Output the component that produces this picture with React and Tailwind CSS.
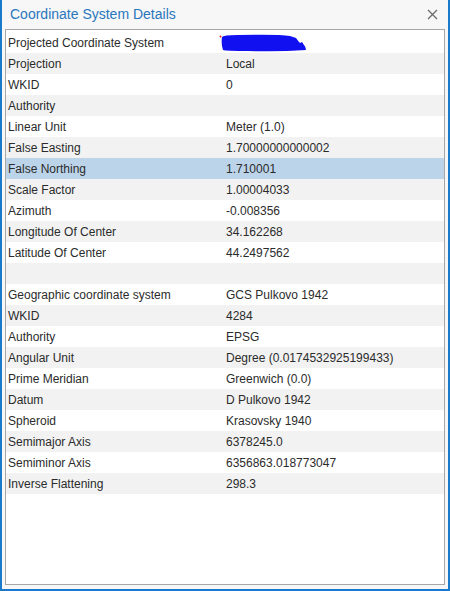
import React from 'react';

const projected = [
  ['Projected Coordinate System', null],
  ['Projection', 'Local'],
  ['WKID', '0'],
  ['Authority', ''],
  ['Linear Unit', 'Meter (1.0)'],
  ['False Easting', '1.70000000000002'],
  ['False Northing', '1.710001'],
  ['Scale Factor', '1.00004033'],
  ['Azimuth', '-0.008356'],
  ['Longitude Of Center', '34.162268'],
  ['Latitude Of Center', '44.2497562'],
  ['', ''],
  ['Geographic coordinate system', 'GCS Pulkovo 1942'],
  ['WKID', '4284'],
  ['Authority', 'EPSG'],
  ['Angular Unit', 'Degree (0.0174532925199433)'],
  ['Prime Meridian', 'Greenwich (0.0)'],
  ['Datum', 'D Pulkovo 1942'],
  ['Spheroid', 'Krasovsky 1940'],
  ['Semimajor Axis', '6378245.0'],
  ['Semiminor Axis', '6356863.018773047'],
  ['Inverse Flattening', '298.3'],
];

// scribble that hides the coordinate system name
const Redacted = () => (
  <svg width="92" height="20" viewBox="0 0 92 20" className="-ml-[8px]">
    <path d="M2 4 L3 3" stroke="#e02020" strokeWidth="2" />
    <path
      d="M4 4 Q5 2 20 2 Q60 1 72 3 L78 5 Q80 8 82 10 L84 9 L86 12 Q88 14 88 17 Q60 19 30 18 Q8 18 5 17 Q3 12 4 4 Z"
      fill="#1010f0"
    />
  </svg>
);

const Row = ({ label, value, index }) => {
  const selected = label === 'False Northing';
  const bg = selected ? 'bg-[#bcd4ea]' : index % 2 === 0 ? 'bg-white' : 'bg-[#f2f2f2]';
  return (
    <div className={`flex h-[21px] items-center ${bg}`}>
      <div className="w-[220px] pl-[2px] shrink-0 whitespace-nowrap">{label}</div>
      <div className="whitespace-nowrap">{value === null ? <Redacted /> : value}</div>
    </div>
  );
};

export default function App() {
  return (
    <div
      className="w-[450px] h-[591px] bg-[#f7f7f7] border-x-2 border-b-2 border-[#1979ca] flex flex-col text-[#2b2b2b]"
      style={{ fontFamily: '"Liberation Sans", Arial, sans-serif' }}
    >
      <div className="h-[29px] flex items-center justify-between pl-[8px] pr-[10px] shrink-0">
        <span className="text-[14px] text-[#2a76bd]">Coordinate System Details</span>
        <svg width="11" height="11" viewBox="0 0 11 11">
          <path d="M1 1 L10 10 M10 1 L1 10" stroke="#6b6b6b" strokeWidth="1.3" />
        </svg>
      </div>
      <div className="mx-[3px] mb-[4px] flex-1 bg-white border border-[#a6a6a6] pt-[2px] text-[12px]">
        {projected.map(([label, value], i) => (
          <Row key={i} label={label} value={value} index={i} />
        ))}
      </div>
    </div>
  );
}
